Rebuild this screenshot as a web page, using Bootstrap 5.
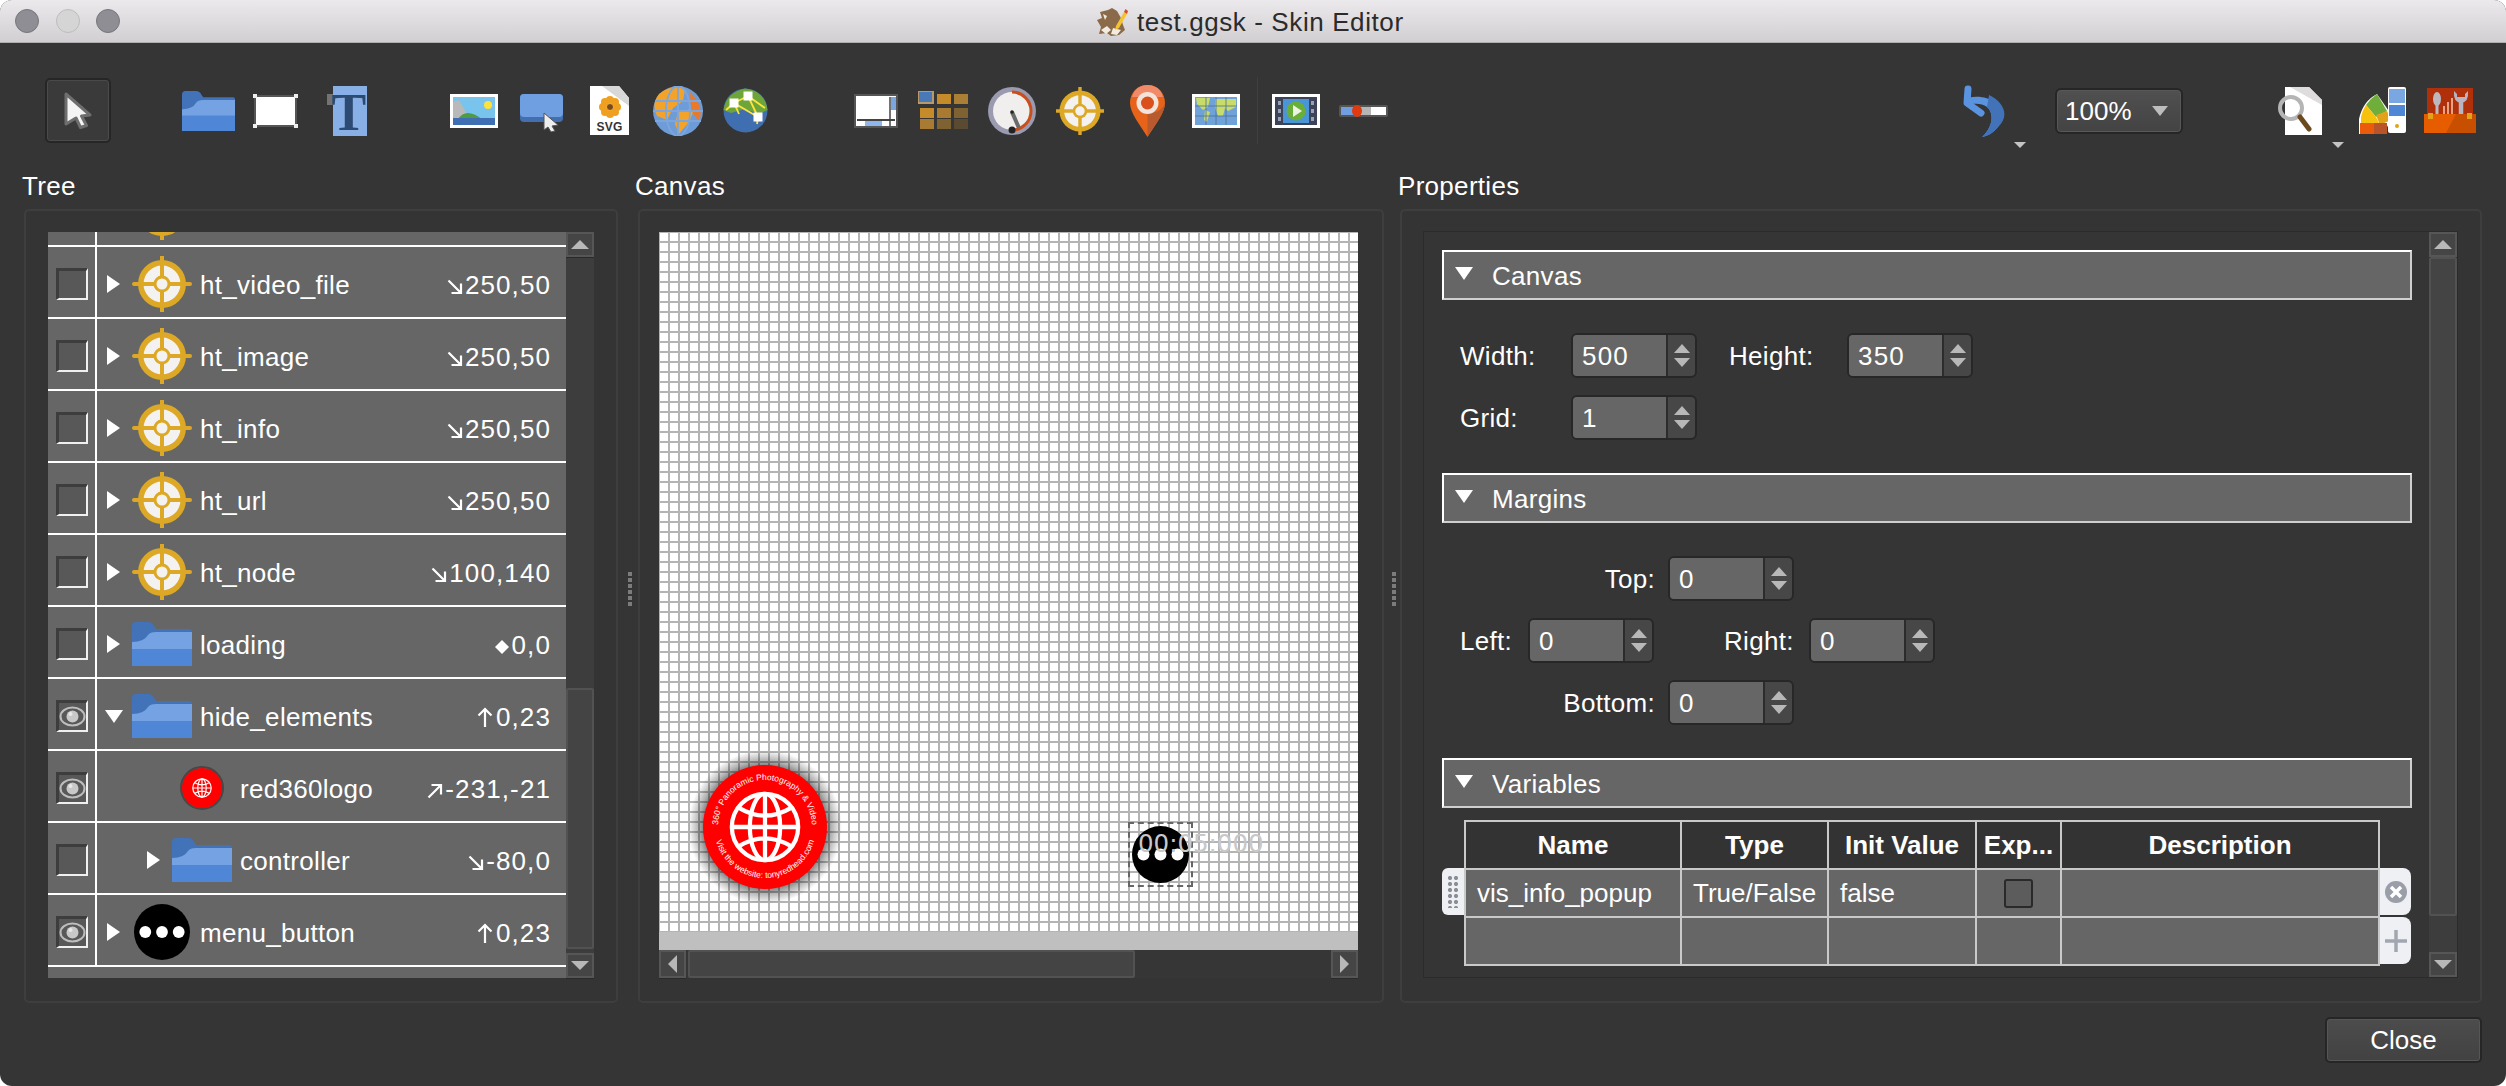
<!DOCTYPE html>
<html lang="en">
<head>
<meta charset="UTF-8">
<title>test.ggsk - Skin Editor</title>
<link href="https://cdn.jsdelivr.net/npm/bootstrap@5.3.3/dist/css/bootstrap.min.css" rel="stylesheet">
<style>
    html, body { height: 1086px; overflow: hidden; background: #fff; }
    body { font-family: "Liberation Sans", Arial, sans-serif; font-size: 26px; line-height: 30px; letter-spacing: .3px; color: #fff; }
    .win { height: 1086px; background: #353535; border-radius: 12px; overflow: hidden; }
    svg { display: block; flex: none; }

    /* title bar */
    .titlebar { height: 43px; background: linear-gradient(#ebe9eb, #d1cfd1); border-bottom: 1px solid #b0aeb0; color: #2b2b2b; font-size: 26px; letter-spacing: .6px; position: relative; }
    .light { width: 24px; height: 24px; border-radius: 50%; background: #8f8e94; border: 1px solid #77767b; margin-right: 16.5px; }
    .light-off { background: #d6d5d6; border-color: #bdbcbd; }
    .lights { padding-left: 15px; }
    .title-wrap { position: absolute; left: 1097px; top: 7px; }
    .title-wrap svg { width: 31px; height: 28px; margin-right: 9px; }

    /* toolbar */
    .toolbar { height: 122px; padding: 35px 30px 22px 45px; }
    .tool-sel { width: 66px; height: 65px; border: 2px solid #262626; border-radius: 5px; background: #3a3a3a; box-shadow: inset 0 0 0 1px #4a4a4a; }
    .tool-sel svg { width: 28px; height: 37px; }
    .tb-folder { width: 53px; height: 40px; margin-left: 71px; }
    .tb-rect { width: 45px; height: 34px; margin-left: 18px; }
    .tb-text { width: 40px; height: 50px; margin-left: 29px; }
    .tb-image { width: 48px; height: 34px; margin-left: 83px; }
    .tb-button { width: 44px; height: 38px; margin-left: 22px; margin-top: 5px; }
    .tb-svg { width: 39px; height: 49px; margin-left: 26px; }
    .tb-globe { width: 50px; height: 50px; margin-left: 24px; }
    .tb-globe2 { width: 45px; height: 45px; margin-left: 20px; }
    .tb-box { width: 44px; height: 34px; margin-left: 86px; }
    .tb-grid { width: 50px; height: 38px; margin-left: 20px; margin-top: -2px; }
    .tb-gauge { width: 48px; height: 48px; margin-left: 20px; }
    .tb-target { width: 48px; height: 48px; margin-left: 20px; }
    .tb-pin { width: 35px; height: 52px; margin-left: 26px; }
    .tb-map { width: 48px; height: 34px; margin-left: 27px; }
    .tb-sep { width: 1px; height: 67px; margin-left: 17px; background: #3f3f3f; }
    .tb-video { width: 48px; height: 34px; margin-left: 14px; }
    .tb-slider { width: 49px; height: 12px; margin-left: 19px; margin-top: 1px; }
    .tb-undo { width: 43px; height: 53px; }
    .tb-more { width: 0; height: 0; border-left: 6px solid transparent; border-right: 6px solid transparent; border-top: 6px solid #c4c4c4; align-self: flex-end; margin-bottom: -5px; }
    .tb-more-a { margin-left: 9px; }
    .tb-more-b { margin-left: 10px; }
    .tb-doc { width: 46px; height: 48px; margin-left: 93px; }
    .tb-palette { width: 47px; height: 47px; margin-left: 15px; }
    .tb-tools { width: 52px; height: 45px; margin-left: 18px; }
    .zoom-combo { width: 128px; height: 46px; margin-left: 29px; border: 2px solid #262626; border-radius: 6px; background: linear-gradient(#505050, #434343); box-shadow: inset 0 0 0 1px #585858; padding: 0 13px 0 8px; letter-spacing: 0; }
    .combo-tri { width: 0; height: 0; border-left: 8px solid transparent; border-right: 8px solid transparent; border-top: 10px solid #bdbdbd; }

    /* panels */
    .panels { padding-left: 24px; }
    .col-tree { width: 594px; }
    .col-canvas { width: 746px; }
    .col-props { width: 1082px; }
    .panel-label { height: 44px; line-height: 42px; margin-left: -2px; }
    .col-canvas .panel-label { margin-left: -3px; }
    .panel-box { height: 794px; border: 2px solid #3e3e3e; border-radius: 5px; background: #343434; }
    .col-tree .panel-box { padding: 21px 22px 23px 22px; }
    .col-canvas .panel-box { padding: 21px 24px 23px 19px; }
    .col-props .panel-box { padding: 20px 22px 23px 21px; }
    .split-h { width: 20px; padding-top: 407px; }
    .split-p { width: 16px; padding-top: 407px; }
    .grip { width: 4px; height: 34px; background: repeating-linear-gradient(#7c7c7c 0 4px, transparent 4px 6px); margin-left: 10px; }
    .split-p .grip { margin-left: 8px; }

    /* tree */
    .tree-list { width: 518px; height: 746px; background: #666; overflow: hidden; }
    .tr-row { height: 72px; border-bottom: 2px solid #fff; }
    .tr-clip { height: 15px; overflow: hidden; }
    .tr-vis { width: 49px; border-right: 2px solid #fff; padding: 3px 0 0 8px; }
    .tr-main { padding-top: 6px; }
    .vis-box { width: 32px; height: 32px; background: #585858; border-top: 3px solid #3d3d3d; border-left: 3px solid #3d3d3d; border-right: 2px solid #f0f0f0; border-bottom: 2px solid #f0f0f0; }
    .vis-box svg { width: 27px; height: 27px; }
    .tr-slot { width: 35px; padding-left: 10px; }
    .tri-r { display: block; width: 0; height: 0; border-top: 9px solid transparent; border-bottom: 9px solid transparent; border-left: 13px solid #fff; margin-top: -2px; }
    .tri-d { display: block; width: 0; height: 0; border-left: 9px solid transparent; border-right: 9px solid transparent; border-top: 13px solid #fff; margin-left: -2px; margin-top: -2px; }
    .tr-ico { width: 60px; height: 56px; margin-top: -2px; }
    .tr-folder { width: 60px; height: 44px; margin-top: -2px; }
    .tr-name { margin-left: 8px; }
    .tr-pos { padding-right: 15px; letter-spacing: 1.1px; }
    .tr-pos svg { width: 16px; height: 16px; margin-right: 2px; margin-top: 3px; }
    .tr-pos svg.arr-n { height: 20px; margin-top: 0; margin-right: 3px; }
    .nest { margin-left: 40px; }
    .tr-clip .tr-ico { margin-bottom: 5px; }

    /* scroll bars */
    .vbar { width: 28px; background: #3d3d3d; }
    .sb-btn { height: 25px; background: #454545; border: 2px solid #565656; box-shadow: 0 1px 0 #2a2a2a; }
    .sb-thumb { background: #444; border: 2px solid #525252; border-radius: 2px; }
    .vbar-tree .sb-thumb { height: 261px; margin-bottom: 4px; }
    .vbar-props .sb-thumb { height: 659px; }
    .tri-up { width: 0; height: 0; border-left: 9px solid transparent; border-right: 9px solid transparent; border-bottom: 9px solid #b8b8b8; }
    .tri-dn { width: 0; height: 0; border-left: 9px solid transparent; border-right: 9px solid transparent; border-top: 9px solid #b8b8b8; }
    .tri-lf { width: 0; height: 0; border-top: 9px solid transparent; border-bottom: 9px solid transparent; border-right: 9px solid #b8b8b8; }
    .tri-rt { width: 0; height: 0; border-top: 9px solid transparent; border-bottom: 9px solid transparent; border-left: 9px solid #b8b8b8; }

    /* canvas */
    .skin-canvas { width: 699px; height: 700px; position: relative; overflow: hidden; background-color: #fff;
        background-image: linear-gradient(to right, transparent 8px, #b4b4b4 8px), linear-gradient(to bottom, transparent 8px, #b4b4b4 8px);
        background-size: 10px 10px; background-position: 1px 1px; }
    .canvas-band { height: 18px; background: #bfbfbf; }
    .hbar { height: 28px; width: 699px; background: #363636; }
    .hbar .sb-btn { width: 27px; height: 28px; }
    .hbar .sb-thumb { width: 447px; margin-left: 2px; background: #444; }
    .item-logo { position: absolute; left: 25px; top: 514px; width: 162px; height: 162px; }
    .item-sel { position: absolute; left: 469px; top: 590px; width: 65px; height: 65px; border: 2px dashed #666; }
    .item-menu { position: absolute; left: 473px; top: 594px; width: 57px; height: 57px; }
    .item-timer { position: absolute; left: 479px; top: 597px; font-family: "DejaVu Sans", sans-serif; font-size: 24.5px; line-height: 30px; letter-spacing: 0; color: #c8c8c8; }

    /* properties */
    .props-inner { width: 1035px; height: 747px; border: 1px solid #2b2b2b; background: #353535; }
    .props-body { width: 1007px; padding: 18px 0 0 18px; }
    .sect-bar { width: 970px; height: 50px; background: #666; border: 2px solid; border-color: #fff #cfcfcf #cfcfcf #fff; padding: 2px 0 0 11px; }
    .sect-bar .tri-d { margin-left: 0; margin-right: 19px; margin-top: -6px; }
    .sect-body { padding: 33px 0 33px 18px; }
    .f-row { height: 45px; }
    .f-row + .f-row { margin-top: 17px; }
    .lb-a { width: 111px; }
    .lb-b { width: 118px; margin-left: 32px; }
    .lb-c { width: 68px; }
    .lb-d { width: 85px; margin-left: 70px; }
    .lb-e { width: 208px; padding-right: 13px; text-align: right; }
    .spin { width: 126px; height: 45px; border: 2px solid #272727; border-radius: 6px; overflow: hidden; background: #474747; }
    .spin-val { width: 95px; background: #666; padding-left: 9px; line-height: 43px; letter-spacing: 1.2px; border-right: 2px solid #2c2c2c; }
    .spin-btns { width: 27px; gap: 5px; }
    .spin-btns .tri-up, .spin-btns .tri-dn { border-left-width: 8px; border-right-width: 8px; }
    .hd-spacer { height: 48px; }
    .var-wrap { margin-top: 12px; }
    .grab { width: 22px; height: 47px; background: #eef0f4; border-radius: 6px 0 0 6px; padding-left: 5px; }
    .grab i { display: block; width: 12px; height: 33px; background-image: radial-gradient(#8b8f98 2px, transparent 2.2px); background-size: 6px 6px; }
    .var-btn { width: 31px; height: 47px; background: #eef0f4; border-radius: 0 8px 8px 0; margin-bottom: 2px; padding-left: 4px; }
    .var-btn svg { width: 24px; height: 24px; }
    table.var-tbl { width: 916px; table-layout: fixed; border-collapse: collapse; margin: 0; letter-spacing: 0; --bs-table-bg: #666; --bs-table-color: #fff; --bs-table-border-color: #c9c9c9; }
    table.var-tbl th, table.var-tbl td { border: 2px solid #c9c9c9; padding: 0 0 0 11px; white-space: nowrap; overflow: hidden; vertical-align: middle; }
    table.var-tbl th { --bs-table-bg: #333; height: 48px; font-weight: 700; text-align: center; padding: 0; }
    table.var-tbl td { height: 47.5px; }
    .exp-chk { width: 29px; height: 29px; border: 2px solid #2a2a2a; border-radius: 3px; background: #5c5c5c; margin: auto; }
    .close-row { padding: 14px 24px 0 0; }
    .btn-close-win { width: 157px; height: 46px; font-size: 26px; line-height: 30px; padding: 0; color: #fff; background: linear-gradient(#4c4c4c, #424242); border: 2px solid #262626; border-radius: 5px; box-shadow: inset 0 0 0 1px #565656; }
</style>
</head>
<body>
<svg width="0" height="0" class="position-absolute">
    <defs>
        <symbol id="i-cursor" viewBox="0 0 28 37"><path d="M2 2 L26 23 L17.500 24 L22.500 33.500 L16.500 35.500 L12 26 L2 32 Z" fill="#f4f4f4" stroke="#6e6e6e" stroke-width="3" stroke-linejoin="round"/></symbol>
        <symbol id="i-folder" viewBox="0 0 60 44" preserveAspectRatio="none"><path d="M0 4 Q0 0 4 0 H16 Q20 0 22 4 L24 7 H58 Q60 7 60 9 V20 H0 Z" fill="#4272b8"/><path d="M0 20 Q12 20 16 13 Q18 10 24 10 H60 V28 H0 Z" fill="#74a2e2"/><rect y="27" width="60" height="17" fill="#4f86d6"/></symbol>
        <symbol id="i-rect" viewBox="0 0 45 34"><rect x="2" y="2" width="41" height="30" fill="#fff" stroke="#555" stroke-width="2"/><g fill="#eee"><rect width="4" height="4"/><rect x="41" width="4" height="4"/><rect y="30" width="4" height="4"/><rect x="41" y="30" width="4" height="4"/></g></symbol>
        <symbol id="i-text" viewBox="0 0 40 50"><rect x="6" width="34" height="50" fill="#88afe6"/><rect y="8" width="6" height="11" fill="#737373"/><text x="22" y="44" text-anchor="middle" font-family="Liberation Serif, serif" font-weight="700" font-size="52" fill="#2d4a72">T</text></symbol>
        <symbol id="i-image" viewBox="0 0 48 34"><rect width="48" height="34" fill="#fff"/><rect x="3" y="3" width="42" height="28" fill="#78c4ec"/><circle cx="38" cy="11" r="4" fill="#ffe23a"/><path d="M3 25 V8 L9 6 L18 22 L32 27 H3 Z" fill="#b9b9b9"/><path d="M8 25 Q16 13 32 25 Z" fill="#4f9a45"/><rect x="3" y="24" width="42" height="7" fill="#3f6fb2"/></symbol>
        <symbol id="i-button" viewBox="0 0 44 38"><rect width="43" height="28" rx="4" fill="#436fb0"/><rect width="43" height="23" rx="4" fill="#6f9fe0"/><path d="M24 19 L38 31 L32 32 L35 37 L31 38 L28 33 L24 36 Z" fill="#eee" stroke="#555" stroke-width="1"/></symbol>
        <symbol id="i-svg" viewBox="0 0 39 49"><path d="M0 0 H29 L39 12 V49 H0 Z" fill="#fff"/><path d="M12 0 H29 L39 12 V20 Z" fill="#d8d8d8"/><g fill="#f0a020"><circle cx="20" cy="14" r="4"/><circle cx="20" cy="28" r="4"/><circle cx="13" cy="21" r="4"/><circle cx="27" cy="21" r="4"/><circle cx="15" cy="16" r="4"/><circle cx="25" cy="16" r="4"/><circle cx="15" cy="26" r="4"/><circle cx="25" cy="26" r="4"/></g><circle cx="20" cy="21" r="3" fill="#7a4a10"/><text x="19.500" y="45" text-anchor="middle" font-family="Liberation Sans, sans-serif" font-weight="700" font-size="12" fill="#333">SVG</text></symbol>
        <symbol id="i-globe" viewBox="0 0 50 50"><circle cx="25" cy="25" r="25" fill="#6d9cd8"/><path d="M6 8 Q18 -2 32 3 L30 15 L20 22 L14 34 L4 30 Q-2 18 6 8 Z" fill="#f3a32a"/><path d="M25 26 L42 22 L36 36 L26 48 L22 38 Z" fill="#f3a32a"/><path d="M37 6 Q52 20 46 36 L38 24 Z" fill="#ea7a2a"/><g fill="none" stroke="#7da7dc" stroke-width="1.800"><ellipse cx="25" cy="25" rx="12" ry="25"/><path d="M25 0 V50 M2 15 H48 M0 25 H50 M2 35 H48"/></g></symbol>
        <symbol id="i-globe2" viewBox="0 0 45 45"><circle cx="22.500" cy="22.500" r="22" fill="#3f6fb0"/><path d="M.5 22 Q3 5 22 .5 Q42 3 44.500 22 L36 26 L22 21 L8 25 Z" fill="#6ea53a"/><path d="M25 8 L11 15 L35 29 M25 8 L35 29 M25 8 L42 20 M11 15 L3 22 M11 15 L16 26 M35 29 L34 36" fill="none" stroke="#ffe33a" stroke-width="1.800"/><g fill="#fff"><rect x="20.500" y="3.500" width="9" height="9"/><rect x="6.500" y="10.500" width="9" height="9"/><rect x="30.500" y="24.500" width="9" height="9"/></g></symbol>
        <symbol id="i-box" viewBox="0 0 44 34"><rect x="1" y="1" width="42" height="32" fill="#fff" stroke="#555" stroke-width="2"/><rect x="37" y="3" width="5" height="13" fill="#7ba7e0"/><path d="M3 26 H41" stroke="#444" stroke-width="2"/><path d="M36 3 V32" stroke="#444" stroke-width="1.500"/><rect x="11" y="27" width="17" height="5" fill="#8fb6e8"/></symbol>
        <symbol id="i-grid" viewBox="0 0 50 38"><rect x="0" y="0" width="15" height="12" fill="#4a79b8" stroke="#b89a6a" stroke-width="2"/><rect x="19" y="3" width="14" height="10" fill="#c58a2a"/><rect x="36" y="3" width="14" height="10" fill="#ab7e35"/><rect x="2" y="17" width="14" height="10" fill="#c58a2a"/><rect x="19" y="17" width="14" height="10" fill="#a97a32"/><rect x="36" y="17" width="14" height="10" fill="#7e6232"/><rect x="2" y="28" width="14" height="10" fill="#a97a32"/><rect x="19" y="28" width="14" height="10" fill="#7e6232"/><rect x="36" y="28" width="14" height="10" fill="#5a4a32"/></symbol>
        <symbol id="i-gauge" viewBox="0 0 48 48"><circle cx="24" cy="24" r="24" fill="#9a9ab0"/><circle cx="24" cy="24" r="19" fill="#f1efed"/><path d="M24 5 A19 19 0 0 1 24 43" fill="none" stroke="#c9501e" stroke-width="3"/><path d="M24 25 L31 41" stroke="#6a6a6a" stroke-width="4"/><circle cx="24" cy="43" r="3.500" fill="#222"/><circle cx="24" cy="25" r="1.800" fill="#222"/></symbol>
        <symbol id="i-target" viewBox="0 0 56 56"><circle cx="28" cy="28" r="24" fill="#dca825"/><circle cx="28" cy="28" r="18.500" fill="#f4f2f0"/><path d="M28 0 V56 M0 28 H56" stroke="#dca825" stroke-width="4" stroke-linecap="round"/><circle cx="28" cy="28" r="8.500" fill="#dca825"/><circle cx="28" cy="28" r="5.500" fill="#f4f2f0"/></symbol>
        <symbol id="i-pin" viewBox="0 0 35 52"><path d="M17.500 0 C7 0 0 8 0 18 C0 28 10 40 17.500 52 C25 40 35 28 35 18 C35 8 28 0 17.500 0 Z" fill="#e8631a"/><path d="M17.500 28 C28 28 33 24 35 18 C35 28 25 40 17.500 52 Z" fill="#b85a2e"/><path d="M2 12 C4 4 10 0 17.500 0 C25 0 31 4 33 12 Z" fill="#f08a68"/><circle cx="17.500" cy="18" r="11" fill="#f2e4dc"/><circle cx="17.500" cy="18" r="6.500" fill="#d9501c"/></symbol>
        <symbol id="i-map" viewBox="0 0 48 34"><rect width="48" height="34" fill="#fff"/><rect x="3" y="3" width="42" height="28" fill="#6fa2d8"/><g fill="#c8dc6a"><path d="M4 4 H18 L16 13 L11 16 L5 10 Z"/><path d="M13 16 L18 18 L15 28 L12 26 Z"/><path d="M23 5 H44 V13 L36 17 L33 14 L31 22 L26 22 L23 14 Z"/></g><path d="M3 12 H45 M3 22 H45 M14 3 V31 M24 3 V31 M34 3 V31" stroke="#4f6f96" stroke-width=".8"/></symbol>
        <symbol id="i-video" viewBox="0 0 48 34"><rect width="48" height="34" fill="#fff"/><rect x="3" y="3" width="42" height="28" fill="#3c4258"/><rect x="11" y="5" width="26" height="24" fill="#4a95d6"/><g fill="#9aa0b4"><rect x="6" y="7" width="3" height="4"/><rect x="6" y="15" width="3" height="4"/><rect x="6" y="23" width="3" height="4"/><rect x="39" y="7" width="3" height="4"/><rect x="39" y="15" width="3" height="4"/><rect x="39" y="23" width="3" height="4"/></g><circle cx="24" cy="17" r="9.500" fill="#6aae3a"/><path d="M21 11 L30 17 L21 23 Z" fill="#eef2e2"/></symbol>
        <symbol id="i-slider" viewBox="0 0 49 12"><rect width="49" height="12" rx="2" fill="#555"/><rect x="2" y="2" width="16" height="8" fill="#6f9fe0"/><rect x="18" y="2" width="14" height="8" fill="#b5b5b5"/><rect x="32" y="2" width="15" height="8" fill="#fff"/><ellipse cx="18" cy="6" rx="5" ry="6" fill="#e03a10"/></symbol>
        <symbol id="i-undo" viewBox="0 0 43 53"><path d="M6 5 L5 19 L19 29" fill="none" stroke="#5a94e0" stroke-width="7" stroke-linecap="round" stroke-linejoin="round"/><path d="M6 14 C28 8 50 26 36 43 C31 49 26 52 20 53 C30 44 33 30 25 23 C20 19 12 19 6 21 Z" fill="#5a94e0"/><path d="M27 11 C42 18 48 32 36 43 C31 49 26 52 20 53 C30 44 33 30 25 23 Z" fill="#4273b8"/></symbol>
        <symbol id="i-doc" viewBox="0 0 46 48"><path d="M9 0 H33 L46 13 V48 H9 Z" fill="#fff"/><path d="M14 0 H33 L46 13 V18 Z" fill="#dedcdc"/><circle cx="15" cy="21" r="11" fill="none" stroke="#b5b5b5" stroke-width="4"/><path d="M24 30 L33 42" stroke="#6a4a1e" stroke-width="5" stroke-linecap="round"/></symbol>
        <symbol id="i-palette" viewBox="0 0 47 47"><path d="M0 32 Q4 14 18 7 L34 30 L24 47 H0 Z" fill="#fff"/><path d="M7 18 Q12 11 18 7 L28 24 L17 30 Z" fill="#6fae3a"/><path d="M2 30 Q3 24 7 18 L17 30 L21 38 L12 38 L2 36 Z" fill="#f6c20e"/><path d="M17 28 L28 24 L32 33 L21 38 Z" fill="#e2a21a"/><path d="M1 36 H15 V47 H1 Z" fill="#ea5c0c"/><path d="M15 36 H28 V47 H15 Z" fill="#b8532a"/><rect x="29" width="18" height="46" rx="2" fill="#fff"/><rect x="30" y="2" width="16" height="14" fill="#7aa6e2"/><rect x="30" y="18" width="16" height="11" fill="#4f86d6"/><circle cx="38" cy="39" r="2" fill="#e2a21a"/></symbol>
        <symbol id="i-tools" viewBox="0 0 52 45"><rect x="3" width="46" height="28" fill="#b0300c"/><rect y="26" width="52" height="19" fill="#e85c00"/><path d="M22 45 L32 26 H52 V45 Z" fill="#c94f00"/><path d="M13 26 V16" stroke="#bdb8c0" stroke-width="3"/><ellipse cx="13" cy="11" rx="4" ry="7" fill="#bdb8c0"/><path d="M20 26 V18 M24 26 V14 M28 26 V10" stroke="#f0b090" stroke-width="1.800"/><path d="M37 26 V14" stroke="#b9b4c2" stroke-width="4.500"/><path d="M30 3 Q29 14 37 15 Q45 14 44 3 L41 6 V9 H33 V6 Z" fill="#b9b4c2"/><rect x="4" y="25" width="5" height="6" fill="#e2a21a"/><rect x="43" y="25" width="5" height="6" fill="#e2a21a"/></symbol>
        <symbol id="i-app" viewBox="0 0 31 28"><path d="M3 4 L11 2 L15 0 L20 3 L24 10 L26 17 L28 22 L22 27 L14 28 L10 25 L2 26 L4 19 L0 12 L5 10 Z" fill="#8a6a48"/><path d="M4 22 L10 18 L14 22 L9 26 Z M16 20 L24 22 L20 27 L14 26 Z M6 6 L10 8 L8 12 Z" fill="#f1ebe0"/><path d="M19 18 L27 4 L30 6 L22 20 L18 22 Z" fill="#f4c430"/><path d="M27 4 L28.500 1 L31 3 L30 6 Z" fill="#d9482f"/></symbol>
        <symbol id="i-eye" viewBox="0 0 27 27"><ellipse cx="13.500" cy="13.500" rx="12" ry="9" fill="none" stroke="#bdbdbd" stroke-width="2"/><circle cx="13.500" cy="13.500" r="6" fill="#c8c8c8"/><circle cx="11.500" cy="11" r="2" fill="#e8e8e8"/></symbol>
        <symbol id="i-globe-w" viewBox="0 0 76 76"><g fill="none" stroke="#fff" stroke-width="4.500"><circle cx="38" cy="38" r="35"/><ellipse cx="38" cy="38" rx="16" ry="35"/><path d="M38 3 V73 M3 38 H73 M11 18 Q38 34 65 18 M11 58 Q38 42 65 58"/></g></symbol>
        <symbol id="i-menu" viewBox="0 0 57 57"><circle cx="28.500" cy="28.500" r="28.500" fill="#000"/><g fill="#fff"><circle cx="11.500" cy="28.500" r="6"/><circle cx="28.500" cy="28.500" r="6"/><circle cx="45.500" cy="28.500" r="6"/></g></symbol>
        <symbol id="a-se" viewBox="0 0 16 16"><path d="M1.500 1.500 L14 14 M14 4.500 V14 H4.500" fill="none" stroke="#fff" stroke-width="2.200"/></symbol>
        <symbol id="a-ne" viewBox="0 0 16 16"><path d="M1.500 14.500 L14 2 M4.500 2 H14 V11.500" fill="none" stroke="#fff" stroke-width="2.200"/></symbol>
        <symbol id="a-n" viewBox="0 0 16 20"><path d="M8 20 V2 M1.500 8.500 L8 2 L14.500 8.500" fill="none" stroke="#fff" stroke-width="2.200"/></symbol>
        <symbol id="a-dia" viewBox="0 0 16 16"><path d="M8 1 L15 8 L8 15 L1 8 Z" fill="#fff"/></symbol>
        <symbol id="i-x" viewBox="0 0 24 24"><circle cx="12" cy="12" r="11" fill="#9a9ea8"/><path d="M7 7 L17 17 M17 7 L7 17" stroke="#fff" stroke-width="3.500"/></symbol>
        <symbol id="i-plus" viewBox="0 0 24 24"><path d="M12 1 V23 M1 12 H23" stroke="#a2a6b0" stroke-width="3.500"/></symbol>
    </defs>
</svg>

<div class="win d-flex flex-column">
    <!-- title bar -->
    <div class="titlebar d-flex align-items-center lights">
        <span class="light"></span><span class="light light-off"></span><span class="light"></span>
        <div class="title-wrap d-flex align-items-center"><svg><use href="#i-app"/></svg>test.ggsk - Skin Editor</div>
    </div>

    <!-- toolbar -->
    <div class="toolbar d-flex align-items-center">
        <div class="tool-sel d-flex align-items-center justify-content-center"><svg><use href="#i-cursor"/></svg></div>
        <svg class="tb-folder"><use href="#i-folder"/></svg>
        <svg class="tb-rect"><use href="#i-rect"/></svg>
        <svg class="tb-text"><use href="#i-text"/></svg>
        <svg class="tb-image"><use href="#i-image"/></svg>
        <svg class="tb-button"><use href="#i-button"/></svg>
        <svg class="tb-svg"><use href="#i-svg"/></svg>
        <svg class="tb-globe"><use href="#i-globe"/></svg>
        <svg class="tb-globe2"><use href="#i-globe2"/></svg>
        <svg class="tb-box"><use href="#i-box"/></svg>
        <svg class="tb-grid"><use href="#i-grid"/></svg>
        <svg class="tb-gauge"><use href="#i-gauge"/></svg>
        <svg class="tb-target"><use href="#i-target"/></svg>
        <svg class="tb-pin"><use href="#i-pin"/></svg>
        <svg class="tb-map"><use href="#i-map"/></svg>
        <span class="tb-sep"></span>
        <svg class="tb-video"><use href="#i-video"/></svg>
        <svg class="tb-slider"><use href="#i-slider"/></svg>
        <svg class="tb-undo ms-auto"><use href="#i-undo"/></svg>
        <span class="tb-more tb-more-a"></span>
        <div class="zoom-combo d-flex align-items-center justify-content-between"><span>100%</span><span class="combo-tri"></span></div>
        <svg class="tb-doc"><use href="#i-doc"/></svg>
        <span class="tb-more tb-more-b"></span>
        <svg class="tb-palette"><use href="#i-palette"/></svg>
        <svg class="tb-tools"><use href="#i-tools"/></svg>
    </div>

    <!-- panels -->
    <div class="panels d-flex">
        <div class="col-tree">
            <div class="panel-label">Tree</div>
            <div class="panel-box d-flex">
                <div class="tree-list">
                    <div class="tr-row tr-clip d-flex align-items-end"><div class="tr-vis align-self-stretch"></div><div class="tr-slot"></div><svg class="tr-ico"><use href="#i-target"/></svg></div>
                    <div class="tr-row d-flex"><div class="tr-vis d-flex align-items-center"><span class="vis-box"></span></div><div class="tr-main d-flex align-items-center flex-grow-1"><div class="tr-slot"><span class="tri-r"></span></div><svg class="tr-ico"><use href="#i-target"/></svg><span class="tr-name">ht_video_file</span><span class="tr-pos ms-auto d-flex align-items-center"><svg><use href="#a-se"/></svg>250,50</span></div></div>
                    <div class="tr-row d-flex"><div class="tr-vis d-flex align-items-center"><span class="vis-box"></span></div><div class="tr-main d-flex align-items-center flex-grow-1"><div class="tr-slot"><span class="tri-r"></span></div><svg class="tr-ico"><use href="#i-target"/></svg><span class="tr-name">ht_image</span><span class="tr-pos ms-auto d-flex align-items-center"><svg><use href="#a-se"/></svg>250,50</span></div></div>
                    <div class="tr-row d-flex"><div class="tr-vis d-flex align-items-center"><span class="vis-box"></span></div><div class="tr-main d-flex align-items-center flex-grow-1"><div class="tr-slot"><span class="tri-r"></span></div><svg class="tr-ico"><use href="#i-target"/></svg><span class="tr-name">ht_info</span><span class="tr-pos ms-auto d-flex align-items-center"><svg><use href="#a-se"/></svg>250,50</span></div></div>
                    <div class="tr-row d-flex"><div class="tr-vis d-flex align-items-center"><span class="vis-box"></span></div><div class="tr-main d-flex align-items-center flex-grow-1"><div class="tr-slot"><span class="tri-r"></span></div><svg class="tr-ico"><use href="#i-target"/></svg><span class="tr-name">ht_url</span><span class="tr-pos ms-auto d-flex align-items-center"><svg><use href="#a-se"/></svg>250,50</span></div></div>
                    <div class="tr-row d-flex"><div class="tr-vis d-flex align-items-center"><span class="vis-box"></span></div><div class="tr-main d-flex align-items-center flex-grow-1"><div class="tr-slot"><span class="tri-r"></span></div><svg class="tr-ico"><use href="#i-target"/></svg><span class="tr-name">ht_node</span><span class="tr-pos ms-auto d-flex align-items-center"><svg><use href="#a-se"/></svg>100,140</span></div></div>
                    <div class="tr-row d-flex"><div class="tr-vis d-flex align-items-center"><span class="vis-box"></span></div><div class="tr-main d-flex align-items-center flex-grow-1"><div class="tr-slot"><span class="tri-r"></span></div><svg class="tr-folder"><use href="#i-folder"/></svg><span class="tr-name">loading</span><span class="tr-pos ms-auto d-flex align-items-center"><svg><use href="#a-dia"/></svg>0,0</span></div></div>
                    <div class="tr-row d-flex"><div class="tr-vis d-flex align-items-center"><span class="vis-box d-flex align-items-center justify-content-center"><svg><use href="#i-eye"/></svg></span></div><div class="tr-main d-flex align-items-center flex-grow-1"><div class="tr-slot"><span class="tri-d"></span></div><svg class="tr-folder"><use href="#i-folder"/></svg><span class="tr-name">hide_elements</span><span class="tr-pos ms-auto d-flex align-items-center"><svg class="arr-n"><use href="#a-n"/></svg>0,23</span></div></div>
                    <div class="tr-row d-flex"><div class="tr-vis d-flex align-items-center"><span class="vis-box d-flex align-items-center justify-content-center"><svg><use href="#i-eye"/></svg></span></div><div class="tr-main d-flex align-items-center flex-grow-1"><div class="tr-slot nest"></div><svg class="tr-ico" viewBox="0 0 60 56"><circle cx="30" cy="28" r="20" fill="#f00"/><circle cx="30" cy="28" r="21" fill="none" stroke="#000" stroke-opacity=".3" stroke-width="2"/><use href="#i-globe-w" x="20" y="18" width="20" height="20"/></svg><span class="tr-name">red360logo</span><span class="tr-pos ms-auto d-flex align-items-center"><svg><use href="#a-ne"/></svg>-231,-21</span></div></div>
                    <div class="tr-row d-flex"><div class="tr-vis d-flex align-items-center"><span class="vis-box"></span></div><div class="tr-main d-flex align-items-center flex-grow-1"><div class="tr-slot nest"><span class="tri-r"></span></div><svg class="tr-folder"><use href="#i-folder"/></svg><span class="tr-name">controller</span><span class="tr-pos ms-auto d-flex align-items-center"><svg><use href="#a-se"/></svg>-80,0</span></div></div>
                    <div class="tr-row d-flex"><div class="tr-vis d-flex align-items-center"><span class="vis-box d-flex align-items-center justify-content-center"><svg><use href="#i-eye"/></svg></span></div><div class="tr-main d-flex align-items-center flex-grow-1"><div class="tr-slot"><span class="tri-r"></span></div><svg class="tr-ico"><use href="#i-menu"/></svg><span class="tr-name">menu_button</span><span class="tr-pos ms-auto d-flex align-items-center"><svg class="arr-n"><use href="#a-n"/></svg>0,23</span></div></div>
                </div>
                <div class="vbar vbar-tree d-flex flex-column">
                    <div class="sb-btn d-flex align-items-center justify-content-center"><span class="tri-up"></span></div>
                    <div class="flex-grow-1"></div>
                    <div class="sb-thumb"></div>
                    <div class="sb-btn d-flex align-items-center justify-content-center"><span class="tri-dn"></span></div>
                </div>
            </div>
        </div>

        <div class="split-h"><div class="grip"></div></div>

        <div class="col-canvas">
            <div class="panel-label">Canvas</div>
            <div class="panel-box">
                <div class="skin-canvas">
                    <svg class="item-logo" viewBox="0 0 162 162">
                        <defs>
                            <radialGradient id="logo-glow"><stop offset=".72" stop-color="#000" stop-opacity=".6"/><stop offset=".82" stop-color="#000" stop-opacity=".3"/><stop offset=".95" stop-color="#000" stop-opacity="0"/></radialGradient>
                            <path id="arc-top" d="M34 81 A47 47 0 0 1 128 81"/>
                            <path id="arc-bot" d="M30 81 A51 51 0 0 0 132 81"/>
                        </defs>
                        <circle cx="81" cy="81" r="81" fill="url(#logo-glow)"/>
                        <circle cx="81" cy="81" r="62" fill="#f00"/>
                        <use href="#i-globe-w" x="45" y="45" width="72" height="72"/>
                        <text font-family="Liberation Sans, sans-serif" font-size="8.500" letter-spacing="0" fill="#fff"><textPath href="#arc-top" startOffset="50%" text-anchor="middle">360° Panoramic Photography &amp; Video</textPath></text>
                        <text font-family="Liberation Sans, sans-serif" font-size="8.500" letter-spacing="0" fill="#fff"><textPath href="#arc-bot" startOffset="50%" text-anchor="middle">Visit the website: tonyredhead.com</textPath></text>
                    </svg>
                    <div class="item-sel"></div>
                    <svg class="item-menu"><use href="#i-menu"/></svg>
                    <div class="item-timer">00:05:000</div>
                </div>
                <div class="canvas-band"></div>
                <div class="hbar d-flex">
                    <div class="sb-btn d-flex align-items-center justify-content-center"><span class="tri-lf"></span></div>
                    <div class="sb-thumb"></div>
                    <div class="sb-btn d-flex align-items-center justify-content-center ms-auto"><span class="tri-rt"></span></div>
                </div>
            </div>
        </div>

        <div class="split-p"><div class="grip"></div></div>

        <div class="col-props">
            <div class="panel-label">Properties</div>
            <div class="panel-box">
                <div class="props-inner d-flex justify-content-between">
                    <div class="props-body">
                        <div class="sect-bar d-flex align-items-center"><span class="tri-d"></span>Canvas</div>
                        <div class="sect-body">
                            <div class="f-row d-flex align-items-center">
                                <span class="lb-a">Width:</span>
                                <div class="spin d-flex"><div class="spin-val">500</div><div class="spin-btns d-flex flex-column align-items-center justify-content-center"><span class="tri-up"></span><span class="tri-dn"></span></div></div>
                                <span class="lb-b">Height:</span>
                                <div class="spin d-flex"><div class="spin-val">350</div><div class="spin-btns d-flex flex-column align-items-center justify-content-center"><span class="tri-up"></span><span class="tri-dn"></span></div></div>
                            </div>
                            <div class="f-row d-flex align-items-center">
                                <span class="lb-a">Grid:</span>
                                <div class="spin d-flex"><div class="spin-val">1</div><div class="spin-btns d-flex flex-column align-items-center justify-content-center"><span class="tri-up"></span><span class="tri-dn"></span></div></div>
                            </div>
                        </div>
                        <div class="sect-bar d-flex align-items-center"><span class="tri-d"></span>Margins</div>
                        <div class="sect-body">
                            <div class="f-row d-flex align-items-center">
                                <span class="lb-e">Top:</span>
                                <div class="spin d-flex"><div class="spin-val">0</div><div class="spin-btns d-flex flex-column align-items-center justify-content-center"><span class="tri-up"></span><span class="tri-dn"></span></div></div>
                            </div>
                            <div class="f-row d-flex align-items-center">
                                <span class="lb-c">Left:</span>
                                <div class="spin d-flex"><div class="spin-val">0</div><div class="spin-btns d-flex flex-column align-items-center justify-content-center"><span class="tri-up"></span><span class="tri-dn"></span></div></div>
                                <span class="lb-d">Right:</span>
                                <div class="spin d-flex"><div class="spin-val">0</div><div class="spin-btns d-flex flex-column align-items-center justify-content-center"><span class="tri-up"></span><span class="tri-dn"></span></div></div>
                            </div>
                            <div class="f-row d-flex align-items-center">
                                <span class="lb-e">Bottom:</span>
                                <div class="spin d-flex"><div class="spin-val">0</div><div class="spin-btns d-flex flex-column align-items-center justify-content-center"><span class="tri-up"></span><span class="tri-dn"></span></div></div>
                            </div>
                        </div>
                        <div class="sect-bar d-flex align-items-center"><span class="tri-d"></span>Variables</div>
                        <div class="var-wrap d-flex">
                            <div>
                                <div class="hd-spacer"></div>
                                <div class="grab d-flex align-items-center"><i></i></div>
                            </div>
                            <table class="table var-tbl">
                                <colgroup><col style="width:216px"><col style="width:147px"><col style="width:148px"><col style="width:85px"><col></colgroup>
                                <thead><tr><th>Name</th><th>Type</th><th>Init Value</th><th>Exp...</th><th>Description</th></tr></thead>
                                <tbody>
                                    <tr><td>vis_info_popup</td><td>True/False</td><td>false</td><td class="ps-0"><div class="exp-chk"></div></td><td></td></tr>
                                    <tr><td></td><td></td><td></td><td></td><td></td></tr>
                                </tbody>
                            </table>
                            <div>
                                <div class="hd-spacer"></div>
                                <div class="var-btn d-flex align-items-center"><svg><use href="#i-x"/></svg></div>
                                <div class="var-btn d-flex align-items-center"><svg><use href="#i-plus"/></svg></div>
                            </div>
                        </div>
                    </div>
                    <div class="vbar vbar-props d-flex flex-column">
                        <div class="sb-btn d-flex align-items-center justify-content-center"><span class="tri-up"></span></div>
                        <div class="sb-thumb"></div>
                        <div class="flex-grow-1"></div>
                        <div class="sb-btn d-flex align-items-center justify-content-center"><span class="tri-dn"></span></div>
                    </div>
                </div>
            </div>
        </div>
    </div>

    <!-- footer -->
    <div class="close-row d-flex justify-content-end">
        <button type="button" class="btn btn-close-win">Close</button>
    </div>
</div>
<script src="https://cdn.jsdelivr.net/npm/bootstrap@5.3.3/dist/js/bootstrap.bundle.min.js"></script>
</body>
</html>
